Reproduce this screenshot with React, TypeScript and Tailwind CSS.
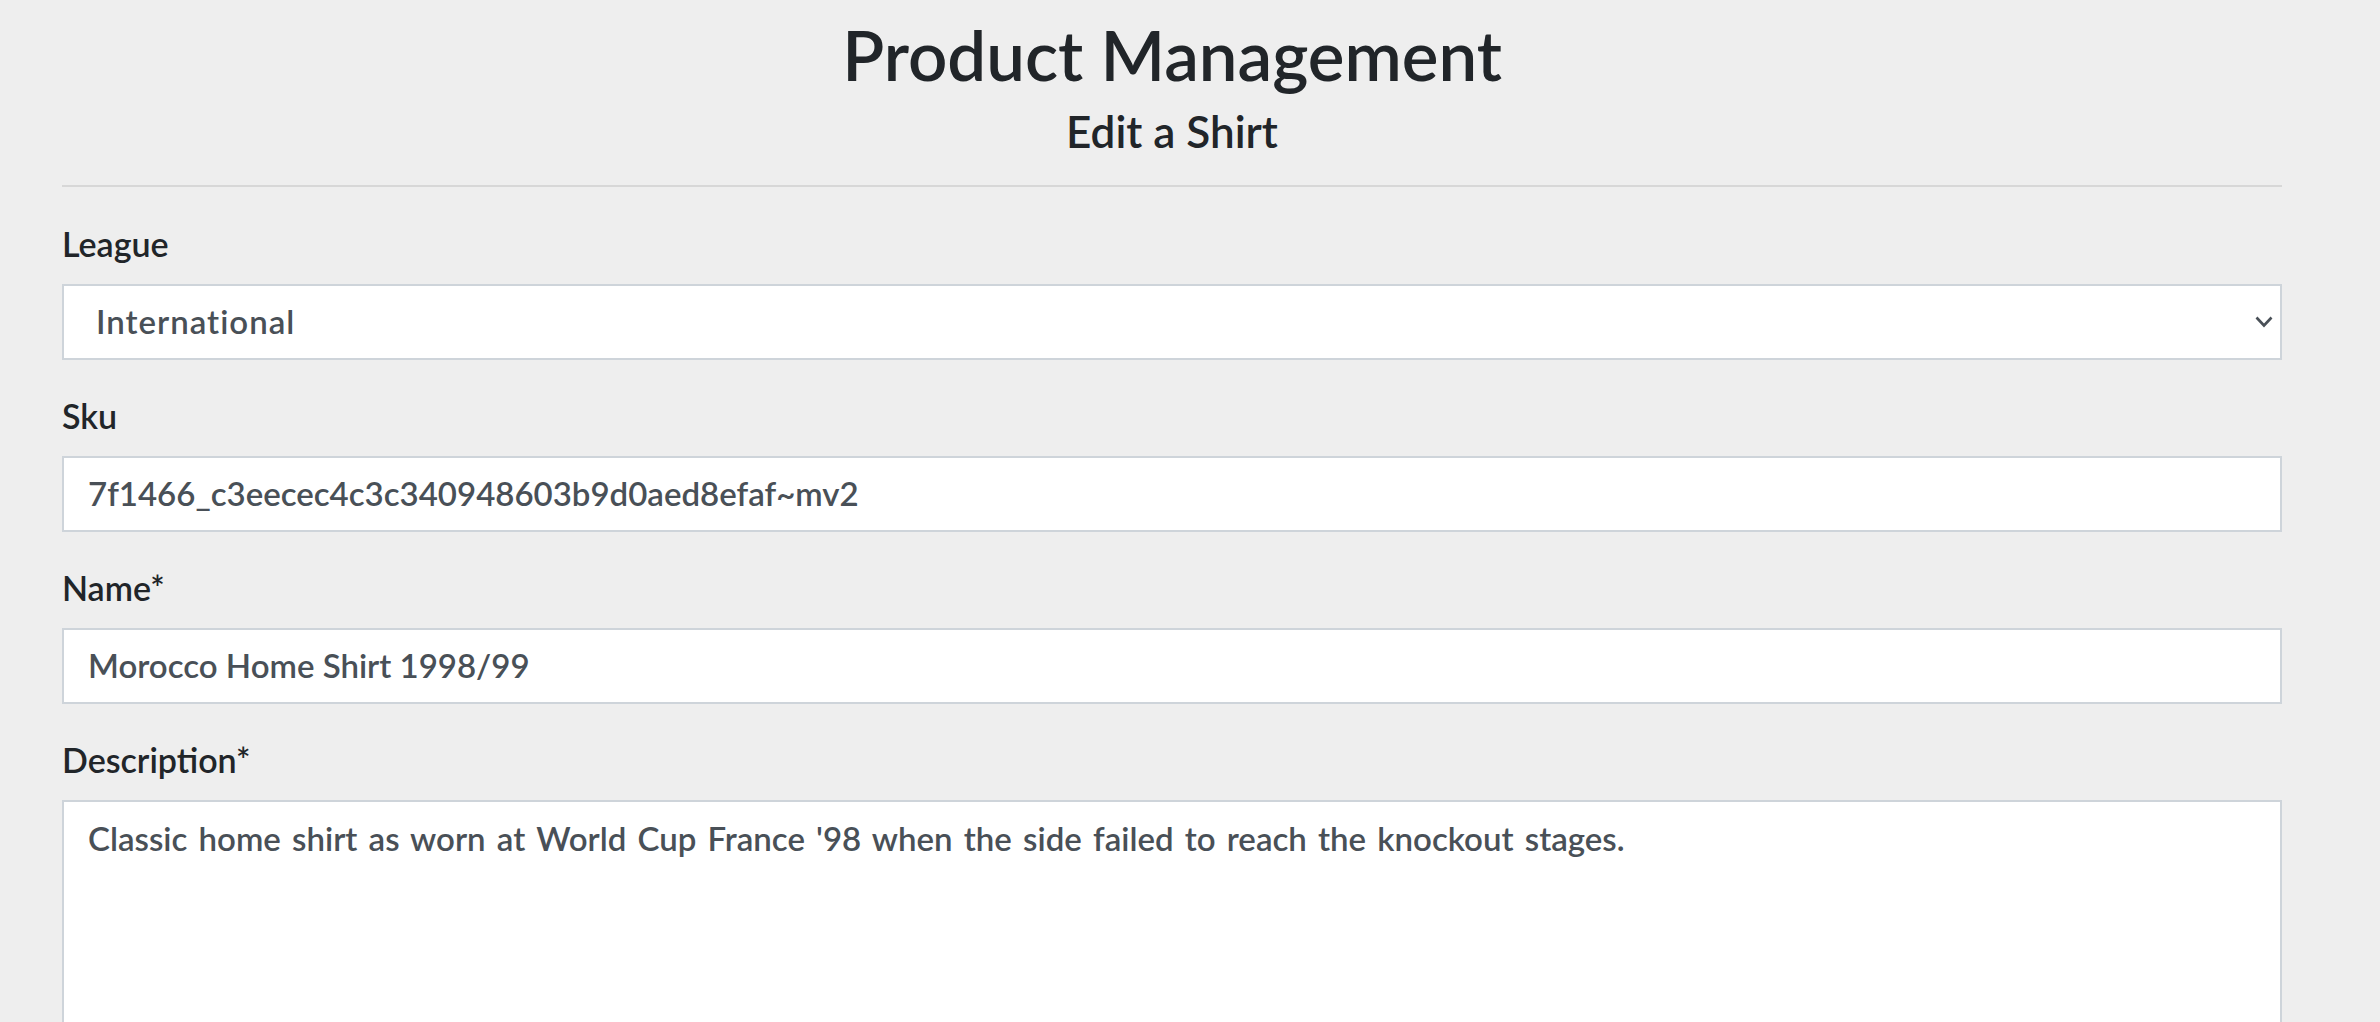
import React from "react";

const font = { fontFamily: "Lato, 'Noto Sans', sans-serif" };

function Label({ children }: { children: React.ReactNode }) {
  return (
    <div className="text-[34px] leading-[48px] font-semibold text-[#212529] mb-[16px]">{children}</div>
  );
}

function Input({ value }: { value: string }) {
  return (
    <div className="h-[76px] border-2 border-[#ced4da] bg-white px-[24px] flex items-center text-[33px] font-semibold text-[#495057] whitespace-nowrap">
      {value}
    </div>
  );
}

export default function App() {
  return (
    <div className="min-h-screen bg-[#eeeeee] overflow-hidden" style={font}>
      <div className="ml-[62px] w-[2220px]">
        <div className="text-center text-[#212529] pt-[12px]">
          <h1 className="text-[69px] leading-[86px] font-semibold">Product Management</h1>
          <h2 className="text-[44px] leading-[54px] mt-[6px] font-semibold">Edit a Shirt</h2>
        </div>
        <div className="mt-[27px] h-[2px] bg-[#d7d7d7]" />
        <div className="mt-[33px]">
          <div className="mb-[32px]">
            <Label>League</Label>
            <div className="h-[76px] border-2 border-[#ced4da] bg-white pl-[32px] pr-[7px] flex items-center justify-between text-[33px] font-semibold text-[#495057]">
              <span className="tracking-[1px]">International</span>
              <svg width="18" height="12" viewBox="0 0 18 12" className="text-[#495057]">
                <polyline points="1.5,1.5 9,9.5 16.5,1.5" fill="none" stroke="currentColor" strokeWidth="2.6" />
              </svg>
            </div>
          </div>
          <div className="mb-[32px]">
            <Label>Sku</Label>
            <Input value="7f1466_c3eecec4c3c340948603b9d0aed8efaf~mv2" />
          </div>
          <div className="mb-[32px]">
            <Label>Name*</Label>
            <Input value="Morocco Home Shirt 1998/99" />
          </div>
          <div className="mb-[32px]">
            <Label>Description*</Label>
            <div className="h-[320px] border-2 border-[#ced4da] bg-white px-[24px] py-[12px] text-[33px] leading-[48px] font-semibold text-[#495057] [word-spacing:3px]">
              Classic home shirt as worn at World Cup France '98 when the side failed to reach the knockout stages.
            </div>
          </div>
        </div>
      </div>
    </div>
  );
}
